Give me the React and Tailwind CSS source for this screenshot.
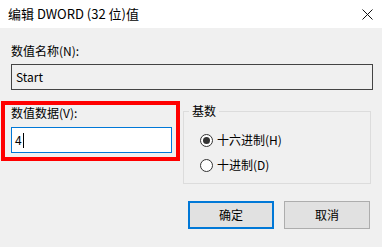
const font = {
  fontFamily: '"Noto Sans CJK SC", "Noto Sans", sans-serif',
};

const Radio = ({ checked, label }) => (
  <div className="flex items-center gap-[4px] h-[16px]">
    <span className="w-[13px] h-[13px] rounded-full border border-[#333333] bg-white flex items-center justify-center">
      {checked && <span className="w-[7px] h-[7px] rounded-full bg-[#333333]" />}
    </span>
    <span className="leading-[16px] text-[12px] text-black">{label}</span>
  </div>
);

export default function App() {
  return (
    <div
      className="w-[382px] h-[247px] bg-[#f0f0f0] overflow-hidden text-[12px] text-black"
      style={font}
    >
      {/* 标题栏 */}
      <div className="h-[28px] bg-white flex items-center justify-between pl-[8px] pr-[9px]">
        <span className="text-[13px] leading-[16px]">编辑 DWORD (32 位)值</span>
        <svg width="11" height="11" viewBox="0 0 11 11" className="mt-[1px]">
          <path d="M0.5 0.5 L10.5 10.5 M10.5 0.5 L0.5 10.5" stroke="#111" strokeWidth="1" />
        </svg>
      </div>

      <div className="px-[11px] pt-[15px]">
        <div className="leading-[16px]">数值名称(N):</div>
        <div className="mt-[5px] h-[26px] w-[362px] border border-[#444444] bg-[#f0f0f0] flex items-center pl-[4px] leading-[16px]">
          Start
        </div>

        <div className="flex mt-[11px]">
          {/* 红框标注 */}
          <div className="-ml-[10px] w-[180px] h-[60px] border-[4px] border-[#ff0000] pl-[6px]">
            <div className="leading-[16px]">数值数据(V):</div>
            <div className="mt-[6px] w-[161px] h-[26px] border border-[#0078d7] bg-white flex items-center pl-[3px]">
              <span className="leading-[16px]">4</span>
              <span className="w-[1px] h-[15px] bg-black ml-[1px]" />
            </div>
          </div>

          {/* 基数 */}
          <div className="ml-[3px] mt-[10px] relative w-[189px] h-[73px] border border-[#dcdcdc]">
            <span className="absolute -top-[9px] left-[5px] px-[3px] bg-[#f0f0f0] leading-[16px]">
              基数
            </span>
            <div className="pl-[16px] pt-[20px] flex flex-col gap-[9px]">
              <Radio checked label="十六进制(H)" />
              <Radio label="十进制(D)" />
            </div>
          </div>
        </div>

        <div className="flex justify-end gap-[10px] mt-[17px] pr-[1px]">
          <button className="w-[86px] h-[28px] border-[2px] border-[#0078d7] bg-[#e1e1e1] text-[12px] leading-[16px]">
            确定
          </button>
          <button className="w-[86px] h-[28px] border border-[#adadad] bg-[#e1e1e1] text-[12px] leading-[16px]">
            取消
          </button>
        </div>
      </div>
    </div>
  );
}
